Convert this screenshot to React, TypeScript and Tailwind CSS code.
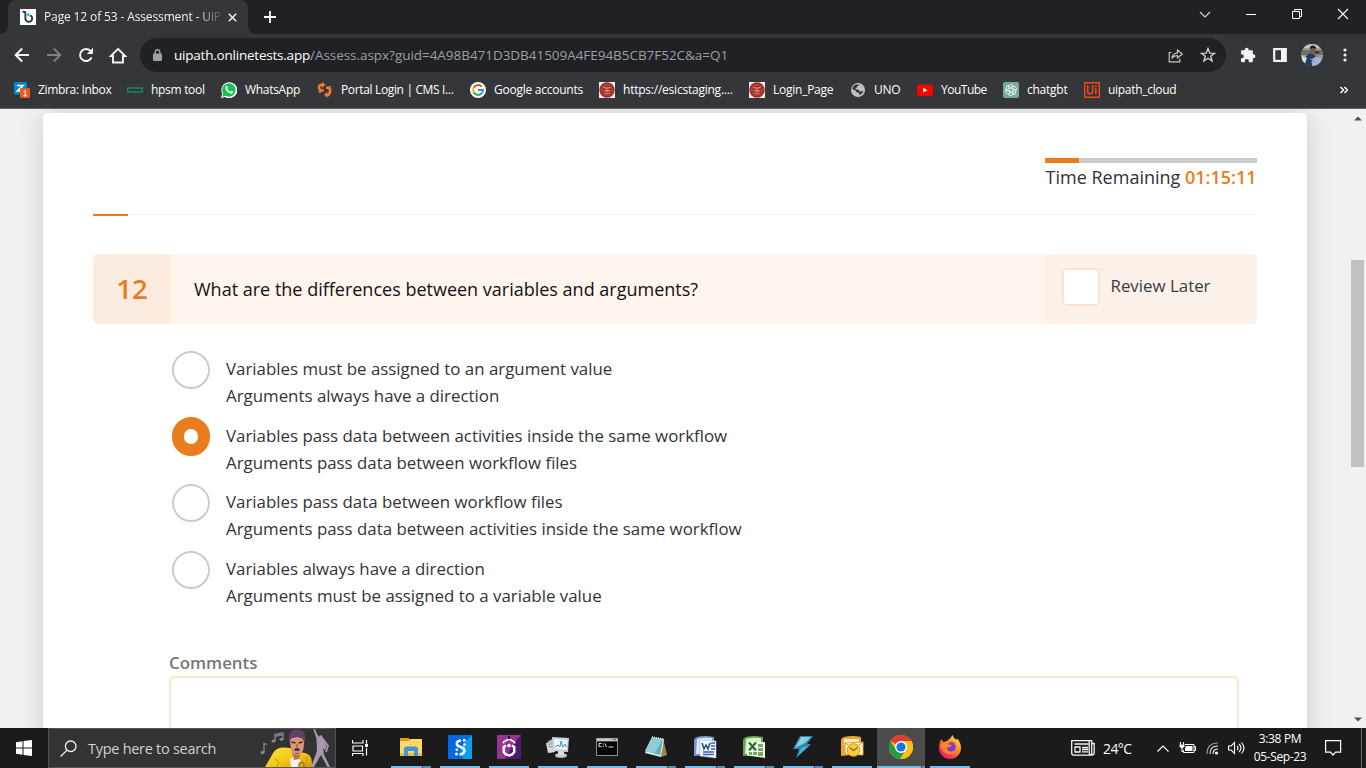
import type { ReactNode } from "react";

const UI = "font-['Open_Sans','Noto_Sans',sans-serif]";

function Svg({ w, h, className = "", children }: { w: number; h: number; className?: string; children: ReactNode }) {
  return (
    <svg width={w} height={h} viewBox={`0 0 ${w} ${h}`} fill="none" className={`block shrink-0 ${className}`}>
      {children}
    </svg>
  );
}

/* ---------- Browser chrome ---------- */

function TabStrip() {
  return (
    <div className="flex h-[34px] bg-[#202124]">
      <div className="relative ml-2 flex h-[34px] w-[240px] items-center rounded-t-lg bg-[#35363a]">
        <Svg w={8} h={8} className="absolute -left-2 bottom-0">
          <path d="M8 0v8H0a8 8 0 0 0 8-8z" fill="#35363a" />
        </Svg>
        <Svg w={8} h={8} className="absolute -right-2 bottom-0">
          <path d="M0 0v8h8a8 8 0 0 1-8-8z" fill="#35363a" />
        </Svg>
        <Svg w={16} h={16} className="ml-3">
          <rect width="16" height="16" fill="#fff" />
          <path d="M2.500 2.700h1.500c1 0 1.400.5 1.400 1.300v5.500a3.400 3.400 0 0 0 6.800 0c0-1.500-.8-2.600-2-3.100" stroke="#2d3a48" strokeWidth="1.900" />
          <circle cx="8.300" cy="5.800" r="1.300" fill="#1fa3dc" />
        </Svg>
        <div className="ml-2 w-[176px] whitespace-nowrap text-[12px] leading-4 tracking-[-0.13px] text-[#f1f1f1] [mask-image:linear-gradient(to_right,#000_154px,transparent_180px)]">
          Page 12 of 53 - Assessment - UiP
        </div>
        <Svg w={9} h={9} className="ml-[8px]">
          <path d="M.8.800l7.400 7.400M8.200.8.800 8.200" stroke="#f1f1f1" strokeWidth="1.500" />
        </Svg>
      </div>
      <Svg w={12} h={12} className="ml-4 mt-[11px]">
        <path d="M6 0v12M0 6h12" stroke="#fff" strokeWidth="1.800" />
      </Svg>
      <div className="ml-auto flex h-[28px] items-center">
        <Svg w={46} h={28}>
          <path d="M18 12l5 5 5-5" stroke="#d6d6d6" strokeWidth="1.100" />
        </Svg>
        <Svg w={46} h={28}>
          <path d="M18 14.500h10" stroke="#fff" />
        </Svg>
        <Svg w={46} h={28}>
          <path d="M18.500 11.500h7v7h-7zM20.500 11.500v-2h7v7h-2" stroke="#fff" />
        </Svg>
        <Svg w={46} h={28}>
          <path d="M18 9l10 10M28 9l-10 10" stroke="#fff" strokeWidth="1.100" />
        </Svg>
      </div>
    </div>
  );
}

function Toolbar() {
  return (
    <div className="flex h-[42px] items-center bg-[#35363a] pl-[14px]">
      <Svg w={16} h={16}>
        <path d="M15 8H2M8.200 1.500 1.700 8l6.500 6.500" stroke="#f1f3f4" strokeWidth="2" />
      </Svg>
      <Svg w={16} h={16} className="ml-4">
        <path d="M1 8h13M7.800 1.500 14.300 8l-6.500 6.500" stroke="#808185" strokeWidth="1.800" />
      </Svg>
      <Svg w={16} h={16} className="ml-4">
        <path d="M13.600 10.300A6 6 0 1 1 12.400 3.900L14 5.500" stroke="#f1f3f4" strokeWidth="2" />
        <path d="M15 .8V7H8.800z" fill="#f1f3f4" />
      </Svg>
      <Svg w={18} h={17} className="ml-[15px]">
        <path d="M9 1.800 1.800 9H4v6.500h10V9h2.200z" stroke="#f1f3f4" strokeWidth="1.900" />
      </Svg>
      <div className="ml-[13px] flex h-[34px] w-[1086px] items-center rounded-full bg-[#202124] pl-[13px]">
        <Svg w={9} h={12}>
          <rect y="4.500" width="9" height="7.500" rx="1" fill="#9aa0a6" />
          <path d="M2.200 5V3a2.300 2.300 0 0 1 4.600 0v2" stroke="#9aa0a6" strokeWidth="1.400" />
        </Svg>
        <div className="ml-3 whitespace-nowrap text-[13.5px] leading-5 text-[#9aa0a6]">
          <span className="tracking-[-0.22px] text-white">uipath.onlinetests.app</span>
          <span className="tracking-[-0.04px]">/Assess.aspx?guid=4A98B471D3DB41509A4FE94B5CB7F52C&amp;a=Q1</span>
        </div>
        <Svg w={16} h={15} className="ml-auto">
          <path d="M3.500 4.500H1.200v9.300h10.600v-3M9.500 4.800V2l4.800 4-4.800 4V7.500C7 7.500 5 8.600 3.800 10.500 4.200 7.300 6.300 5.200 9.500 4.800z" stroke="#c4c7c5" strokeWidth="1.200" />
        </Svg>
        <Svg w={16} h={16} className="ml-4 mr-[10px]">
          <path d="M8 1.500l1.700 4.600 4.900.2-3.900 3 1.400 4.700L8 11.300l-4.100 2.700 1.400-4.700-3.900-3 4.900-.2z" stroke="#d4d6d8" strokeWidth="1.300" />
        </Svg>
      </div>
      <Svg w={16} h={16} className="ml-[14px]">
        <path d="M1.200 3.300h3.500v-.6a2 2 0 0 1 4 0v.6h3.200a1 1 0 0 1 1 1v3h.5a2 2 0 0 1 0 4h-.5v3a1 1 0 0 1-1 1H8.800V14a2 2 0 0 0-4 0v1.300H2a1 1 0 0 1-1-1v-3h.8a2 2 0 0 0 0-4H1z" fill="#f1f3f4" />
      </Svg>
      <Svg w={14} h={14} className="ml-[17px]">
        <path d="M1.200 1.200h11.600v11.600H1.200z" stroke="#f1f3f4" strokeWidth="2.200" />
        <path d="M8 1h5v12H8z" fill="#f1f3f4" />
      </Svg>
      <Svg w={22} h={22} className="ml-[14px]">
        <clipPath id="avatar"><circle cx="11" cy="11" r="11" /></clipPath>
        <g clipPath="url(#avatar)">
          <path d="M0 0h22v22H0z" fill="#9b9da3" />
          <path d="M0 6h22v5H0z" fill="#66775c" />
          <path d="M3 0h15v4H3z" fill="#c3bfc5" />
          <path d="M4 22l1-10 4-3 5 2 2 4 3 7z" fill="#213d65" />
          <circle cx="12" cy="6" r="2.700" fill="#7b5549" />
          <path d="M8.800 5c0-5 6.500-4 6.500 0l-3-1z" fill="#1b1b22" />
          <path d="M11 15l5-3 5 4-3 6h-7z" fill="#9db4dd" />
          <circle cx="16" cy="10.500" r="2.400" fill="#a97764" />
          <path d="M13.500 9.500c0-3 5-3 5 0z" fill="#25252c" />
          <path d="M1 12l5 2-2 5-3-2z" fill="#d9dbe2" />
          <path d="M9 15l5 2M10 19l4-3" stroke="#c08b76" />
        </g>
      </Svg>
      <Svg w={4} h={14} className="ml-[20px]">
        <circle cx="2" cy="2" r="1.600" fill="#f1f3f4" /><circle cx="2" cy="7" r="1.600" fill="#f1f3f4" /><circle cx="2" cy="12" r="1.600" fill="#f1f3f4" />
      </Svg>
    </div>
  );
}

function EsicIcon() {
  return (
    <Svg w={16} h={16}>
      <path d="M0 0h16v16H0z" fill="#f7eeeb" />
      <circle cx="8" cy="8" r="7.700" fill="#a02f26" />
      <circle cx="8" cy="8" r="5.300" stroke="#b9564a" strokeWidth=".8" />
      <path d="M4.500 5.200 7 6.200M11.500 5.200 9 6.200M4.800 8.500q3.200 2 6.400 0M8 5v4" stroke="#e0a79c" strokeWidth="1" />
      <path d="M5.500 11.500h5" stroke="#d99a8f" strokeWidth=".8" />
    </Svg>
  );
}

function Bookmark({ icon, label, className }: { icon: ReactNode; label: string; className: string }) {
  return (
    <div className={`flex shrink-0 items-center gap-2 whitespace-nowrap ${className}`}>
      {icon}
      <span>{label}</span>
    </div>
  );
}

function Bookmarks() {
  return (
    <div className="flex h-[33px] items-center border-b border-[#625f66] bg-[#35363a] pb-[4px] pl-[14px] text-[12px] leading-4 text-white">
      <Bookmark
        className="w-[113px] tracking-[-0.34px]"
        label="Zimbra: Inbox"
        icon={
          <Svg w={16} h={16}>
            <rect width="13" height="12.500" rx="1" fill="#0087c9" />
            <path d="M3 3.500h6L3.500 9H7" stroke="#fff" strokeWidth="1.700" />
            <rect x="6" y="6" width="10" height="10" rx="1" fill="#f05423" />
            <path d="M9.500 9.500l1.700-1v5.500M9.500 13.800h3.500" stroke="#fff" strokeWidth="1" />
          </Svg>
        }
      />
      <Bookmark
        className="w-[94px] tracking-[-0.3px]"
        label="hpsm tool"
        icon={<Svg w={16} h={16}><path d="M.7 6h14.600v4H.7z" stroke="#108b68" strokeWidth="1.300" /></Svg>}
      />
      <Bookmark
        className="w-[96px] tracking-[-0.3px]"
        label="WhatsApp"
        icon={
          <Svg w={16} h={16}>
            <path d="M0 16l1.200-4.200A8 8 0 1 1 4 14.900z" fill="#fff" />
            <path d="M1.300 14.700l.9-3.200a6.700 6.700 0 1 1 2.400 2.300z" fill="#16c253" />
            <path d="M5.300 4c.6-.4 1 .1 1.500 1.500.1.500-.4.800-.6 1.200.7 1.500 1.700 2.300 3 2.900.5-.3.800-.9 1.100-.9l1.800.9c0 1.500-1 2.300-2.500 2C6.800 11 4.700 8.300 4.300 6c0-.9.400-1.600 1-2z" fill="#fff" />
          </Svg>
        }
      />
      <Bookmark
        className="w-[153px] tracking-[-0.35px]"
        label="Portal Login | CMS I..."
        icon={
          <Svg w={16} h={16}>
            <path d="M6 3H3.300L2.200 4.500v2.300l1.600 1.700h3" stroke="#f17c32" strokeWidth="2.600" />
            <path d="M5 0l3.500 2.800L5 6zM1 9h4l-2 2.500z" fill="#f17c32" />
            <path d="M9 5.800h2.700l1.300 1.500v3.200L11.500 13H9.300" stroke="#f17c32" strokeWidth="2.600" />
            <path d="M10.300 9.700l-3.300 3.100 3.300 3.200zM12 3.800v2l3-1z" fill="#f17c32" />
          </Svg>
        }
      />
      <Bookmark
        className="w-[129px] tracking-[-0.25px]"
        label="Google accounts"
        icon={
          <Svg w={16} h={16}>
            <circle cx="8" cy="8" r="8" fill="#fff" />
            <path d="M11.700 4.600A5 5 0 0 0 3.700 5.700" stroke="#ea4335" strokeWidth="2" />
            <path d="M3.700 5.600a5 5 0 0 0 0 4.800" stroke="#fbbc05" strokeWidth="2" />
            <path d="M3.700 10.300a5 5 0 0 0 7.700 1.300" stroke="#34a853" strokeWidth="2" />
            <path d="M8 8h5a5 5 0 0 1-1.700 3.700" stroke="#4285f4" strokeWidth="2" />
          </Svg>
        }
      />
      <Bookmark className="w-[150px] tracking-[-0.23px]" label="https://esicstaging...." icon={<EsicIcon />} />
      <Bookmark className="w-[101px] tracking-[-0.25px]" label="Login_Page" icon={<EsicIcon />} />
      <Bookmark
        className="w-[67px] tracking-[-0.3px]"
        label="UNO"
        icon={
          <Svg w={16} h={16}>
            <circle cx="8" cy="8" r="7" fill="#bdc1c6" />
            <path d="M9.500 2.700c-.3 1.300-2.500.8-2.500 2.300 0 1-1.600.9-1.600 2 0 .6 2.700.2 3.300.8.800.7.300 1.500 1.500 1.700 1.200.1 1.600-.6 3-.3-.5 1.800-1.700 3-3.400 3.800l-1.300-2.400-2.300-.3-.6-1.900-3.200-1.200c.1-2.400 1.600-4 3.400-4.700z" fill="#35363a" />
          </Svg>
        }
      />
      <Bookmark
        className="w-[86px] tracking-[-0.5px]"
        label="YouTube"
        icon={<Svg w={16} h={16}><rect y="2.500" width="16" height="11.500" rx="3" fill="#f00" /><path d="M6.200 5.800v4.800l4.300-2.400z" fill="#fff" /></Svg>}
      />
      <Bookmark
        className="w-[81px] tracking-[-0.25px]"
        label="chatgbt"
        icon={
          <Svg w={16} h={16}>
            <rect width="16" height="16" rx="2" fill="#74aa9c" />
            <g stroke="#e9f3f0" strokeWidth=".9">
              {[0, 60, 120, 180, 240, 300].map((a) => (
                <path key={a} transform={`rotate(${a} 8 8)`} d="M6.100 9.100V5A2.600 2.600 0 0 1 10.900 3.700L7.900 5.400" />
              ))}
            </g>
          </Svg>
        }
      />
      <Bookmark
        className="w-[110px] tracking-[-0.3px]"
        label="uipath_cloud"
        icon={
          <Svg w={16} h={16}>
            <path d="M.7.700h14.600v14.600H.7z" stroke="#fa4616" strokeWidth="1.400" />
            <path d="M3.700 3.300v5.900q0 2.500 2.500 2.500t2.500-2.500V3.300M11.800 6.300v6" stroke="#fa4616" strokeWidth="1.500" />
            <path d="M11 3.300h1.700v1.700H11z" fill="#fa4616" />
          </Svg>
        }
      />
      <Svg w={8} h={8} className="ml-auto mr-[18px]">
        <path d="M.5 1 3.500 4l-3 3M4.500 1l3 3-3 3" stroke="#fff" strokeWidth="1.500" />
      </Svg>
    </div>
  );
}

/* ---------- Assessment page ---------- */

const options = [
  { lines: ["Variables must be assigned to an argument value", "Arguments always have a direction"], selected: false },
  { lines: ["Variables pass data between activities inside the same workflow", "Arguments pass data between workflow files"], selected: true },
  { lines: ["Variables pass data between workflow files", "Arguments pass data between activities inside the same workflow"], selected: false },
  { lines: ["Variables always have a direction", "Arguments must be assigned to a variable value"], selected: false },
];

function Assessment() {
  return (
    <div className="flex h-[619px] overflow-hidden bg-[#f1f1f1]">
      <main className="ml-[43px] mt-1 h-[640px] w-[1264px] shrink-0 rounded-t-[5px] bg-white px-[50px] shadow-[0_0_26px_rgba(0,0,0,0.14)]">
        <div className="ml-auto h-[101px] w-[212px] pt-[45px]">
          <div className="h-[5px] bg-[#cbcbcb]"><div className="h-full w-[34px] bg-[#e97d1e]" /></div>
          <div className="whitespace-nowrap pl-[0.6px] pt-[2px] text-[18px] leading-6 text-[#303038]">
            Time Remaining <span className="font-semibold text-[#e97d1e]">01:15:11</span>
          </div>
        </div>
        <div className="h-[40px]"><div className="h-px bg-[#eeeeee]"><div className="h-[2px] w-[35px] bg-[#e97d1e]" /></div></div>

        <section className="flex h-[70px] overflow-hidden rounded-[5px] bg-[#fef5ee]">
          <div className="flex w-[78px] items-center justify-center bg-[#fbecdf] pb-px text-[27.5px] font-semibold leading-[41px] text-[#e97d1e]">12</div>
          <h1 className="flex-1 self-center pl-[23px] text-[18px] leading-6 text-[#111]">What are the differences between variables and arguments?</h1>
          <label className="flex w-[210px] bg-[#fcf1e8] pl-[15px] pt-[14px] text-[16.875px] leading-[35px] text-[#3a3a3e]">
            <span className="h-[38px] w-[38px] rounded-[5px] border-2 border-[#fbe3d0] bg-white" />
            <span className="pl-[10.5px]">Review Later</span>
          </label>
        </section>

        <section className="pl-[79px] pt-[27px]">
          {options.map((o) => (
            <div key={o.lines[0]} className="flex h-[66.6px] text-[16.885px] leading-[27px] text-[#333338]">
              {o.selected ? (
                <span className="-mt-px h-[39px] w-[38px] rounded-full border-[12px] border-[#e97d1e] bg-white" />
              ) : (
                <span className="h-[38px] w-[38px] rounded-full border-2 border-[#cccccc] bg-white" />
              )}
              <div className="whitespace-nowrap pl-4 pt-[4px]">
                <p>{o.lines[0]}</p>
                <p>{o.lines[1]}</p>
              </div>
            </div>
          ))}
        </section>

        <section className="pl-[76px] pr-[18px] pt-[33px]">
          <h2 className="text-[16.875px] font-semibold leading-[26px] text-[#777]">Comments</h2>
          <div className="h-[120px] rounded-[5px] border-2 border-[#fbe3d0]" />
        </section>
      </main>
      <div className="ml-auto flex w-[16px] shrink-0 flex-col items-center bg-[#f1f1f1] pr-px">
        <Svg w={8} h={5} className="mt-[7px]"><path d="M0 4.500 4 .5l4 4z" fill="#505050" /></Svg>
        <div className="mt-[139px] h-[207px] w-[13px] bg-[#c1c1c1]" />
        <Svg w={8} h={5} className="mb-[6px] mt-auto"><path d="M0 .5l4 4 4-4z" fill="#505050" /></Svg>
      </div>
    </div>
  );
}

/* ---------- Taskbar ---------- */

function TaskItem({ children, active = false, multi = false }: { children: ReactNode; active?: boolean; multi?: boolean }) {
  return (
    <div className={`flex h-10 w-12 shrink-0 flex-col items-center ${active ? "bg-[#4b4b4b]" : ""}`}>
      <div className="flex h-[38px] items-center">{children}</div>
      <div className={`flex h-[2px] justify-end bg-[#76b9ed] ${active ? "w-12" : "w-10"}`}>
        {multi && <div className={`h-full border-l border-[#2f4a60] bg-[#5a8cb4] ${active ? "w-1" : "w-[9px]"}`} />}
      </div>
    </div>
  );
}

function SearchArt() {
  return (
    <Svg w={78} h={38} className="ml-auto">
      <defs>
        <linearGradient id="jacket" x1="0" y1="0" x2="1" y2="1"><stop stopColor="#ffe34a" /><stop offset=".55" stopColor="#f3c80e" /><stop offset="1" stopColor="#d39a0c" /></linearGradient>
      </defs>
      <path d="M18 12V5.500l8-1.800v6.500M18 7.300l8-1.800" stroke="#8d839b" strokeWidth="1.300" />
      <path d="M7 23v-8.500l3 1" stroke="#8d839b" strokeWidth="1.300" />
      <ellipse cx="16.500" cy="12" rx="2" ry="1.500" fill="#8d839b" /><ellipse cx="24.500" cy="10.300" rx="2" ry="1.500" fill="#8d839b" /><ellipse cx="5.500" cy="23.500" rx="2" ry="1.500" fill="#8d839b" />
      <path d="M56.500.5 58 0l3.500 8 1-1.500q2.500-1 3 1.500l1 1.500 3 8.500-2 3.500-1.500-3 1 7 6 12.500h-2.500l-6.500-12-7 12h-3l6-16-.5-12z" fill="#a59ab0" />
      <path d="M66 10l5 7-2 6" stroke="#a59ab0" strokeWidth="1.800" />
      <path d="M8 38l7-12c4-8 10-8 18-7l5 3 10 2c7 2 7 7 7 14z" fill="url(#jacket)" />
      <path d="M18 30l4 3-2 5M50 28l-1 10" stroke="#c99a0b" />
      <path d="M33 30l3-2 8 3-2 7h-8z" fill="#f4edf3" />
      <path d="M34 19l3 12 5-1 3-11z" fill="#bb7554" />
      <path d="M32.500 9c0-9 15-9 15 0l-1 11q-2 6-6.500 6-4 0-6-6z" fill="#dc9778" />
      <path d="M32 9.500c-2-11.500 17-12.500 16-1l-.7 5-2-4-5.300-1.500-6 1.500-1.300 4z" fill="#5c416b" />
      <path d="M34.500 13l4 1M41.500 14l4-1" stroke="#3c2430" strokeWidth="1.300" />
      <path d="M37 20.500q3-2.500 6 0l-.8 1.200h-4.400z" fill="#2d2934" />
      <path d="M40 15v4M38 24q2 1 4 0" stroke="#8b4938" />
      <path d="M42 38v-3q2.500-3.500 5 0v3" stroke="#96720f" strokeWidth="1.300" />
    </Svg>
  );
}

function Taskbar() {
  return (
    <footer className="flex h-10 items-center bg-[#1b1b1b] text-white">
      <Svg w={16} h={16} className="ml-4">
        <path d="M0 2.200 6.500 1.300v6.200H0zM7.500 1.100 16 0v7.500H7.500zM0 8.500h6.500v6.200L0 13.800zM7.500 8.500H16V16l-8.500-1.100z" fill="#fff" />
      </Svg>
      <div className="ml-4 flex h-10 w-[288px] items-center overflow-hidden border border-[#555] bg-[#333]">
        <Svg w={17} h={17} className="ml-[11px]">
          <circle cx="10.700" cy="6.300" r="5.300" stroke="#f3f3f3" strokeWidth="1.300" />
          <path d="M7 10.100.6 16.500" stroke="#f3f3f3" strokeWidth="1.300" />
        </Svg>
        <span className="ml-[11px] whitespace-nowrap pt-[2px] text-[14.500px] leading-5 tracking-[-0.28px] text-[#d0d0d0]">Type here to search</span>
        <SearchArt />
      </div>
      <Svg w={17} h={16} className="ml-4 mr-[18px]">
        <path d="M.5 0v3.500M11 0v3.500M.5 3h10.500M1 6h9.500v5H1zM.5 16v-3M11 16v-3M.5 13.500h10.500M14.500 0v3.500M14.500 8v7.500" stroke="#fff" strokeWidth="1.200" />
        <path d="M13 3.800h3v3.200h-3z" fill="#fff" />
      </Svg>

      <div className="flex gap-px">
        <TaskItem multi>
          <Svg w={22} h={20}>
            <path d="M0 1h9v3H0z" fill="#dda317" /><path d="M0 4h8l2-2h12v17H0z" fill="#ffd862" /><path d="M0 16h22v3H0z" fill="#f0bd41" /><path d="M4 19v-8l2-1.500h10l2 1.500v8h-4v-5H8v5z" fill="#3e96dc" />
          </Svg>
        </TaskItem>
        <TaskItem>
          <Svg w={24} h={24}>
            <path d="M0 0h24v24H0z" fill="#0569e0" /><path d="M24 0 12 13l3 11h9z" fill="#0c9ff2" />
            <path d="M13 5.500Q8.500 6 8.800 9q.3 2 3.700 3 4 1 4 3.700-.3 3.300-5 3.800" stroke="#fff" strokeWidth="2.500" /><circle cx="16.300" cy="5.300" r="1.500" fill="#fff" /><circle cx="8.500" cy="19" r="1.500" fill="#fff" /><circle cx="8.800" cy="14.800" r="1.300" fill="#fff" /><circle cx="16.500" cy="9.500" r="1.300" fill="#fff" />
          </Svg>
        </TaskItem>
        <TaskItem>
          <Svg w={24} h={24}>
            <path d="M0 0h24v24H0z" fill="#963494" /><path d="M18 7l6-7v24H8z" fill="#4e1b6c" />
            <path d="M6.500 8.500V7L12 4l5.500 3v1.500" stroke="#fff" strokeWidth="1.600" />
            <path d="M9 10.500 6.800 12v5l2 2.500L12 20.500l3.200-1 2-2.500v-5L15 10.500" stroke="#fff" strokeWidth="2.500" />
            <circle cx="12" cy="10.500" r="1.800" fill="#fff" /><path d="M12 1v3" stroke="#2c0c46" strokeWidth="2" />
          </Svg>
        </TaskItem>
        <TaskItem>
          <Svg w={24} h={22}>
            <path d="M2 5l7-3 3 12-7 3z" fill="#a6aaa7" /><path d="M0 7l8-2 1 11-7 1z" fill="#d6d8d4" /><path d="M2 8.500l5-1M2.500 11l5-1" stroke="#888e8b" /><ellipse cx="15" cy="19.500" rx="6" ry="2.300" fill="#c7c9c6" /><path d="M12 15h6v4h-6z" fill="#ddd" /><path d="M6 1l17 1-1 14-15-1z" fill="#cbd0cf" /><path d="M8 3l13.500 1-1 10-12-1z" fill="#eef5fc" /><path d="M9 11l3-2 2 2 1-6 2 6 2-3 1.500 3" stroke="#3b94cf" />
          </Svg>
        </TaskItem>
        <TaskItem>
          <Svg w={22} h={20}>
            <path d="M0 1h22v18H0z" fill="#89908f" /><path d="M1 4.500h20V18H1z" fill="#050505" /><path d="M1 1.500h20v2.500H1z" fill="#c6cdcf" /><path d="M16 2.500h1M18 2.500h2" stroke="#315879" />
            <path d="M5.500 6.500H3v3h2.500M7.500 6.500v1M7.500 9v1M9 6.500l1.500 3.500M12.500 10h5" stroke="#fff" strokeWidth=".9" />
          </Svg>
        </TaskItem>
        <TaskItem multi>
          <Svg w={22} h={22}>
            <path d="M18 2l4 17-6 2z" fill="#a88048" /><path d="M7 2l12 1-3 18-16-4z" fill="#dcecef" /><path d="M7 1l11 2-3 16-15-4z" fill="#63a9bb" /><path d="M7 1l11 2-8 14-10-2z" fill="#a4dce3" opacity=".7" /><path d="M7 1l11 2" stroke="#d6e9e8" strokeWidth="1.500" strokeDasharray="1 1" />
          </Svg>
        </TaskItem>
        <TaskItem multi>
          <Svg w={23} h={23}>
            <path d="M3 1Q10-1 20 1v18L0 20V5q0-3 3-4z" fill="#7199d4" /><path d="M3 3q6-2 15-1v15L2 18z" fill="#d9e9fb" /><path d="M6 4l16 1v17L6 20z" fill="#fafcff" stroke="#a8badb" strokeWidth=".6" /><path d="M8 7l2 6 2-4 2 4 2-6" stroke="#1e4f9f" strokeWidth="1.600" /><path d="M17 7h4M17 10h4M17 13h4M9 16h11M9 18.500h11" stroke="#315dac" strokeWidth="1.300" />
          </Svg>
        </TaskItem>
        <TaskItem multi>
          <Svg w={23} h={23}>
            <path d="M3 1Q10-1 20 1v18L0 20V5q0-3 3-4z" fill="#61a54d" /><path d="M3 3q6-2 15-1v15L2 18z" fill="#d9f2cc" /><path d="M4 7l18-1v16L4 19.500z" fill="#f5fbf1" /><path d="M6 6.500l7 8M13 6.500l-7 8" stroke="#257329" strokeWidth="2.300" /><path d="M15 8h5v3h-5zM15 12h5v3h-5zM6 16h3v3H6zM10 16h4v3h-4zM15 16h5v4h-5z" fill="#70ad61" />
          </Svg>
        </TaskItem>
        <TaskItem multi>
          <Svg w={20} h={23}>
            <path d="M7 0h13l-6 8h4L3 22l3-9H0z" fill="#2f84ad" /><path d="M8 1h10l-6 6L2 12z" fill="#86cee1" /><path d="M8 12l9-3-12 11z" fill="#54acca" />
          </Svg>
        </TaskItem>
        <TaskItem>
          <Svg w={23} h={22}>
            <path d="M3 1Q12-1 20 1v17L0 20V4q0-2 3-3z" fill="#f1a42a" /><path d="M3 3h15v6H3z" fill="#fff0c4" /><path d="M4 7l18-1v13L4 18z" fill="#fff8db" stroke="#e6a631" /><path d="M4 7l9 6 9-7" stroke="#d28d20" /><circle cx="12.500" cy="14" r="6.300" fill="#f7ce3f" stroke="#dc9a20" /><path d="M8.500 11.500l4 3 4-3" stroke="#8f5b16" strokeWidth="1.200" />
          </Svg>
        </TaskItem>
        <TaskItem active multi>
          <Svg w={24} h={24}>
            <circle cx="12" cy="12" r="12" fill="#fbc116" /><path d="M12 12 1.600 6A12 12 0 0 1 22.400 6z" fill="#e33b2e" /><path d="M1.600 6A12 12 0 0 0 11 24l6-10-10 1z" fill="#229b4a" /><path d="M12 6h10.400A12 12 0 0 1 11.500 24l6-9z" fill="#fbc116" /><circle cx="12" cy="12" r="6" fill="#fff" /><circle cx="12" cy="12" r="4.600" fill="#1a73e8" />
          </Svg>
        </TaskItem>
        <TaskItem>
          <Svg w={24} h={24}>
            <defs><linearGradient id="fox" x1="1" y1="0" x2=".2" y2="1"><stop stopColor="#fff44f" /><stop offset=".4" stopColor="#ff9a20" /><stop offset=".75" stopColor="#ff3a50" /><stop offset="1" stopColor="#e31587" /></linearGradient></defs>
            <path d="M3 4l2.500 3 3-1q3-1 6-6 1 3 3.500 4.500L20 4q3 4.500 3 9a11 11 0 0 1-22 0Q1 8 3 4z" fill="url(#fox)" /><circle cx="12.500" cy="12.500" r="5" fill="#7140d8" /><path d="M2 9l4-2 4 .5 1 2 3 .5-2 2-3 .5q0 4 4 4 4 0 5-3 0 6-6 6Q4 19 2 9z" fill="#ff8526" /><path d="M12 6.500q6 0 6 6l-3-3z" fill="#b833d0" />
          </Svg>
        </TaskItem>
      </div>

      <div className="ml-auto flex h-10 items-center">
        <Svg w={24} h={16}>
          <path d="M.7.700h20v14.500H3.200a2.500 2.500 0 0 1-2.500-2.500zM20.700 3.500h2.500v9a2.500 2.500 0 0 1-5 0V1M3.500 4h14M4 7h5v5H4zM11 7.500h6M11 9.500h6M11 11.800h6" stroke="#f3f3f3" strokeWidth="1.300" />
        </Svg>
        <span className="ml-2 w-[45px] whitespace-nowrap text-[14px] tracking-[-0.6px]">24°C</span>
        <Svg w={12} h={7} className="ml-[9px]"><path d="M.5 6.500 6 1l5.500 5.500" stroke="#fff" strokeWidth="1.200" /></Svg>
        <Svg w={17} h={12} className="ml-[10px]">
          <path d="M6 2.500h9v8H4.500V8M15 4.500h1.500v4H15" stroke="#fff" /><path d="M7 4h6.500v5H6V6z" fill="#fff" /><path d="M1.500 0v2.500M4.500 0v2.500M3 6v3.500h2" stroke="#fff" strokeWidth="1.100" /><path d="M.5 2.500h5v2L4 6H2L.5 4.500z" fill="#fff" />
        </Svg>
        <Svg w={13} h={13} className="ml-[10px]">
          <path d="M1 12Q1 1 12 1" stroke="#999" strokeWidth="1.200" /><path d="M4 12q0-8 8-8M7 12q0-5 5-5" stroke="#eee" strokeWidth="1.100" /><circle cx="10.500" cy="11" r="1.600" fill="#fff" />
        </Svg>
        <Svg w={17} h={14} className="ml-[9px]">
          <path d="M.6 5h2.500L6.500 1.500v11L3.100 9H.6z" stroke="#fff" strokeWidth="1.100" /><path d="M9 5q2 2 0 4M11 3q4 4 0 8M13.500 1.500q5 5.500 0 11" stroke="#fff" strokeWidth="1.100" />
        </Svg>
        <div className="ml-[5px] w-[60px] whitespace-nowrap text-center text-[12px] leading-[18px] tracking-[-0.35px]">
          <div>3:38 PM</div>
          <div>05-Sep-23</div>
        </div>
        <Svg w={17} h={16} className="ml-[15px]">
          <path d="M.6.600h15v11.500h-5L8 15l-2.500-2.900H.6z" stroke="#fff" strokeWidth="1.200" />
        </Svg>
        <div className="ml-[19px] mr-1 h-10 w-px bg-[#6a6a6a]" />
      </div>
    </footer>
  );
}

export default function App() {
  return (
    <div className={`flex h-[768px] w-[1366px] flex-col overflow-hidden ${UI}`}>
      <TabStrip />
      <Toolbar />
      <Bookmarks />
      <Assessment />
      <Taskbar />
    </div>
  );
}
